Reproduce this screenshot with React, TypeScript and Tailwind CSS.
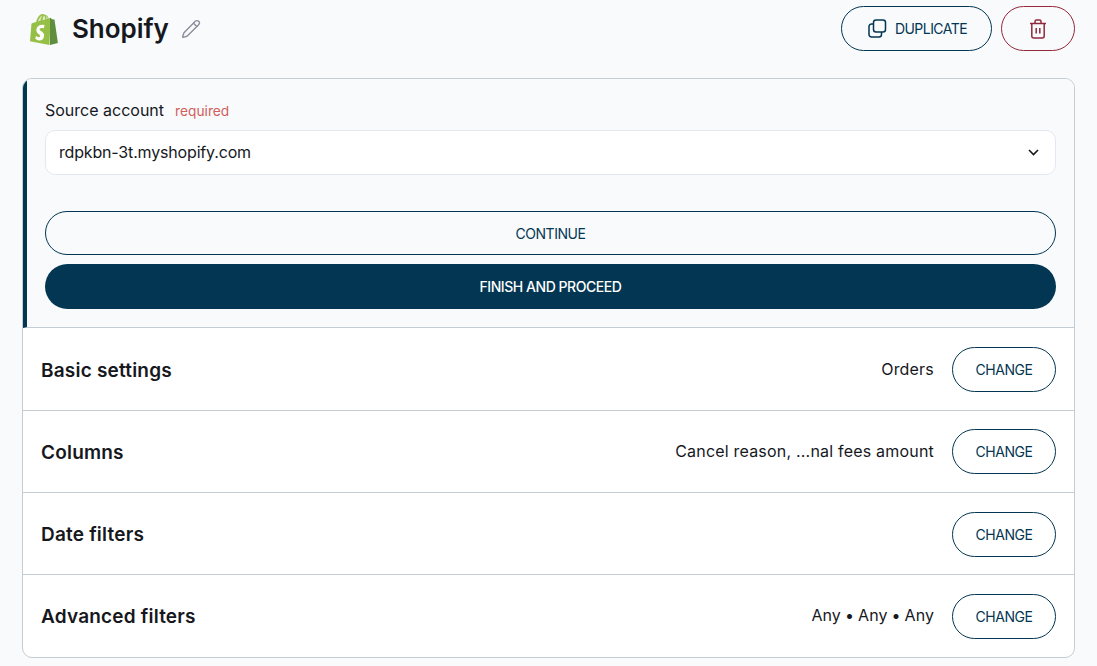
import React from "react";
import { Pencil } from "lucide-react";

function ChangeButton() {
  return (
    <button className="w-[104px] h-[45px] rounded-full border border-[#033652] text-[#033652] text-[14px] tracking-[-0.45px] flex items-center justify-center bg-white shrink-0">
      CHANGE
    </button>
  );
}

function Row({ title, value, heightClass, valueClass }: { title: string; value?: string; heightClass: string; valueClass?: string }) {
  return (
    <div className={`flex items-center px-[18px] ${heightClass}`}>
      <div className="text-[19px] font-semibold text-[#16181d] tracking-[0.2px] flex-1 pt-[3px]">{title}</div>
      {value && <div className={`text-[16px] text-[#16181d] mr-[18px] mt-[-2px] ${valueClass ?? "tracking-[0.2px]"}`}>{value}</div>}
      <ChangeButton />
    </div>
  );
}

export default function App() {
  return (
    <div className="w-[1097px] h-[666px] overflow-hidden bg-[#f8fafc] font-['Inter',sans-serif] px-[22px]">
      <div className="h-[78px] flex items-start">
        <div className="flex items-center h-[58px] pl-[8px] flex-1">
          <svg width="28" height="31" viewBox="0 0 28 31" className="shrink-0">
            <path d="M20 4 L18.6 4.4 C18 2.6 17 1 15.2 1 C14.4 0 13.5 0 13 0 C8.8 0 6.8 5.2 6.2 7.9 L2.7 9 C1.6 9.3 1.6 9.4 1.4 10.4 L0 27.3 L19.5 31 L20.5 4.2 Z" fill="#95bf47" />
            <path d="M20 4 L20 31 L28 29 C28 29 24.6 6 24.5 5.8 C24.4 5.6 24.3 5.5 24.1 5.5 L22 5.3 L20.5 3.8 Z" fill="#5e8e3e" />
            <path d="M14.6 11.2 L13.7 14.5 C13.7 14.5 12.6 14 11.4 14.1 C9.6 14.2 9.6 15.3 9.6 15.6 C9.7 17.2 13.9 17.5 14.1 21.2 C14.3 24.2 12.5 26.2 10 26.4 C7 26.5 5.3 24.7 5.3 24.7 L6 22 C6 22 7.6 23.3 8.9 23.2 C9.8 23.1 10.1 22.4 10 21.9 C9.9 19.9 6.6 20 6.4 16.6 C6.2 13.8 8 11 12.1 10.8 C13.7 10.7 14.6 11.2 14.6 11.2 Z" fill="#fff" />
            <path d="M8 7.4 C8.6 5 10 2.2 12.5 1.4 C11.3 3 10.8 5 10.6 6.6 Z M12.4 6.3 C12.6 4.6 13.2 2.6 14 1.6 C15 2.4 15.2 4 15.3 5.4 Z M16.5 5 C16.4 3.9 16.2 2.8 15.8 2.2 C17 2.4 17.6 3.6 17.9 4.6 Z" fill="#dcebc0" />
          </svg>
          <h1 className="text-[26px] leading-none font-semibold text-[#16181d] ml-[14px] tracking-[-0.05px]">Shopify</h1>
          <Pencil className="w-[20px] h-[20px] ml-[12px] text-[#8c8f9b]" strokeWidth={1.7} />
        </div>
        <div className="flex gap-[9px] pt-[6px]">
          <button className="w-[151px] h-[45px] rounded-full border border-[#033652] text-[#033652] text-[14px] tracking-[-0.55px] pl-[2px] flex items-center justify-center">
            <svg width="19" height="19" viewBox="0 0 19 19" fill="none" stroke="#033652" strokeWidth="1.5" className="mr-[8px] -mt-[1px]">
              <rect x="5.5" y="1" width="12" height="12" rx="2.5" />
              <path d="M5.5 5 H3.5 A2.5 2.5 0 0 0 1 7.5 V15.5 A2.5 2.5 0 0 0 3.5 18 H11 A2.5 2.5 0 0 0 13.5 15.5 V13" />
            </svg>
            DUPLICATE
          </button>
          <button className="w-[74px] h-[45px] rounded-full border border-[#97283a] flex items-center justify-center">
            <svg width="18" height="20" viewBox="0 0 18 20" fill="none" stroke="#8f2a3c" strokeWidth="1.5">
              <path d="M1 4.5 H17" />
              <path d="M6 4.5 V2.5 A1.5 1.5 0 0 1 7.5 1 H10.5 A1.5 1.5 0 0 1 12 2.5 V4.5" />
              <path d="M2.8 4.5 V17 A2 2 0 0 0 4.8 19 H13.2 A2 2 0 0 0 15.2 17 V4.5" />
              <path d="M7.2 9 V14.5 M10.8 9 V14.5" />
            </svg>
          </button>
        </div>
      </div>
      <div className="w-[1053px] h-[580px] rounded-[10px] border border-[#c4ccd4] bg-white overflow-hidden divide-y divide-[#c4ccd4]">
        <div className="h-[249px] bg-[#f8fafc] border-l-4 border-l-[#033652] pl-[18px] pr-[18px] pt-[21px]">
          <div className="flex items-baseline h-[20px] leading-[20px]">
            <span className="text-[16px] text-[#16181d]">Source account</span>
            <span className="text-[13.75px] text-[#d0605e] ml-[11px]">required</span>
          </div>
          <div className="mt-[10px] h-[45px] rounded-[10px] border border-[#e2e8f0] bg-white flex items-center justify-between pl-[13px] pr-[16px]">
            <span className="text-[16px] text-[#16181d] tracking-[-0.17px] pb-[2px]">rdpkbn-3t.myshopify.com</span>
            <svg width="11" height="7" viewBox="0 0 11 7" fill="none" stroke="#16181d" strokeWidth="1.6"><path d="M1 1 L5.5 5.5 L10 1" /></svg>
          </div>
          <button className="mt-[36px] w-full h-[44px] rounded-full border border-[#033652] text-[#033652] text-[14px] tracking-[-0.45px] flex items-center justify-center">
            CONTINUE
          </button>
          <button className="mt-[9px] w-full h-[45px] rounded-full bg-[#033652] text-white text-[14px] font-medium tracking-[-0.45px] flex items-center justify-center">
            FINISH AND PROCEED
          </button>
        </div>
        <Row title="Basic settings" value="Orders" heightClass="h-[83px] pt-[1px]" />
        <Row title="Columns" value="Cancel reason, ...nal fees amount" heightClass="h-[82px]" />
        <Row title="Date filters" heightClass="h-[82px] pt-[1px]" />
        <Row title="Advanced filters" value="Any • Any • Any" heightClass="h-[82px]" valueClass="[word-spacing:-0.5px] tracking-[0.05px]" />
      </div>
    </div>
  );
}
